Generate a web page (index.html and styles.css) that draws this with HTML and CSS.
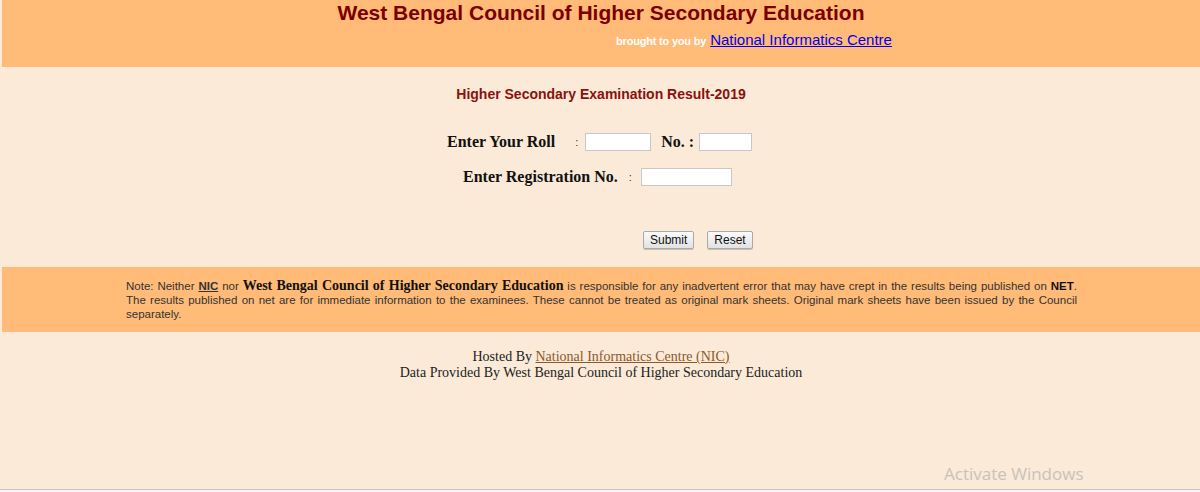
FILE: index.html
```html
<!DOCTYPE html>
<html>
<head>
<meta charset="utf-8">
<title>WBCHSE Result 2019</title>
<link rel="stylesheet" href="styles.css">
</head>
<body>
<div class="page">
  <div class="header">
    <div class="title">West Bengal Council of Higher Secondary Education</div>
    <div class="byline"><span class="brought">brought to you by</span> <a href="#" class="niclink">National Informatics Centre</a></div>
  </div>

  <div class="main">
    <div class="exam">Higher Secondary Examination Result-2019</div>
    <div class="row row-roll">
      <span class="lbl">Enter Your Roll</span>
      <span class="colon colon-roll">:</span>
      <input class="inp inp-roll" type="text">
      <span class="lbl lbl-no">No. :</span>
      <input class="inp inp-no" type="text">
    </div>
    <div class="row row-reg">
      <span class="lbl">Enter Registration No.</span>
      <span class="colon colon-reg">:</span>
      <input class="inp inp-reg" type="text">
    </div>
    <div class="buttons">
      <button class="btn btn-submit" type="button">Submit</button>
      <button class="btn" type="button">Reset</button>
    </div>
  </div>

  <div class="note">
    <p class="note-text">Note: Neither <a href="#" class="nic">NIC</a> nor <b class="council">West Bengal Council of Higher Secondary Education</b> is responsible for any inadvertent error that may have crept in the results being published on <b>NET</b>. The results published on net are for immediate information to the examinees. These cannot be treated as original mark sheets. Original mark sheets have been issued by the Council separately.</p>
  </div>

  <div class="footer">
    <div>Hosted By <a href="#" class="hostlink">National Informatics Centre (NIC) </a></div>
    <div>Data Provided By West Bengal Council of Higher Secondary Education</div>
  </div>
</div>
<div class="watermark">Activate Windows</div>
<div class="bottomline"></div>
</body>
</html>
```
FILE: styles.css
```css
html, body {
  margin: 0;
  padding: 0;
  height: 100%;
}
body {
  background: #faead7;
  font-family: "Liberation Serif", "Times New Roman", serif;
  overflow: hidden;
  position: relative;
}
.page {
  padding-left: 2px;
}
.header {
  background: #ffbb77;
  height: 67px;
  box-sizing: border-box;
  padding-top: 0;
}
.title {
  font-family: "Liberation Sans", Arial, sans-serif;
  font-weight: bold;
  font-size: 21px;
  color: #7a0000;
  text-align: center;
  line-height: 26px;
}
.byline {
  text-align: center;
  padding-left: 306px;
  margin-top: 5px;
  line-height: 18px;
}
.brought {
  font-family: "Liberation Sans Narrow", "Liberation Sans", Arial, sans-serif;
  font-weight: bold;
  font-size: 11px;
  color: #ffffff;
  letter-spacing: -0.2px;
}
.niclink {
  font-family: "Liberation Sans", Arial, sans-serif;
  font-size: 15px;
  color: #0000ee;
  text-decoration: underline;
}
.main {
  height: 200px;
  box-sizing: border-box;
  padding-top: 18px;
}
.exam {
  font-family: "Liberation Sans", Arial, sans-serif;
  font-weight: bold;
  font-size: 14px;
  color: #8b1010;
  text-align: center;
  line-height: 18px;
}
.row {
  display: flex;
  align-items: center;
  height: 20px;
}
.row-roll {
  margin-top: 29px;
  padding-left: 445px;
}
.row-reg {
  margin-top: 15px;
  padding-left: 461px;
}
.lbl {
  font-weight: bold;
  font-size: 16px;
  color: #111;
}
.colon {
  font-family: "Liberation Sans", Arial, sans-serif;
  font-size: 11px;
  color: #333;
}
.colon-roll { margin-left: 20px; margin-right: 7px; }
.colon-reg { margin-left: 11px; margin-right: 9px; }
.lbl-no { margin-left: 10px; margin-right: 5px; }
.inp {
  height: 18px;
  box-sizing: border-box;
  border: 1px solid #c8c8c8;
  background: #fff;
  padding: 0;
  margin: 0;
}
.inp-roll { width: 66px; }
.inp-no { width: 53px; }
.inp-reg { width: 91px; }
.buttons {
  display: flex;
  gap: 13px;
  padding-left: 641px;
  margin-top: 44px;
}
.btn {
  font-family: "Liberation Sans", Arial, sans-serif;
  font-size: 12px;
  color: #111;
  height: 18px;
  padding: 0 6px;
  border: 1px solid #a9a9a9;
  border-radius: 2px;
  background: linear-gradient(#fafafa, #e2e2e2);
  box-shadow: 0 1px 0 #c9c0b5;
}
.note {
  background: #ffbb77;
  height: 65px;
  box-sizing: border-box;
  padding: 12px 0 0 124px;
}
.note-text {
  margin: 0;
  width: 951px;
  font-family: "Liberation Sans", Arial, sans-serif;
  font-size: 11.5px;
  line-height: 14px;
  color: #333;
  text-align: justify;
}
.nic {
  color: #333;
  font-weight: bold;
  text-decoration: underline;
}
.council {
  font-family: "Liberation Serif", "Times New Roman", serif;
  font-size: 14px;
  color: #222;
}
.note-text b {
  color: #111;
}
.footer {
  padding-top: 17px;
  text-align: center;
  font-size: 14px;
  line-height: 16px;
  color: #222;
}
.hostlink {
  color: #8b5a2b;
  text-decoration: underline;
}
.watermark {
  position: absolute;
  left: 944px;
  top: 462px;
  font-family: "Open Sans", "Noto Sans", sans-serif;
  font-size: 17px;
  color: #c9c2ba;
}
.bottomline {
  position: absolute;
  left: 0;
  right: 0;
  top: 489px;
  height: 3px;
  border-top: 1px solid #c8c8c8;
  background: #f4f4f4;
}
```
